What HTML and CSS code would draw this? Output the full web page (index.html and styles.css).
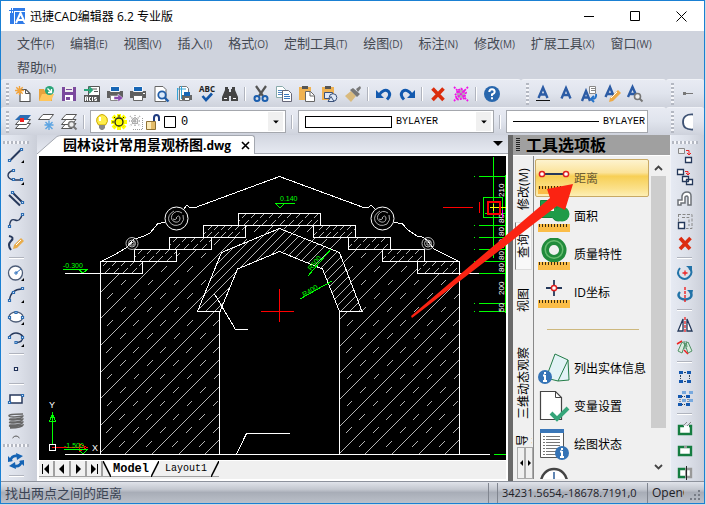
FILE: index.html
```html
<!DOCTYPE html>
<html lang="zh-CN">
<head>
<meta charset="utf-8">
<title>迅捷CAD编辑器 6.2 专业版</title>
<link rel="stylesheet" href="styles.css">
</head>
<body>
<div class="app">
  <header class="titlebar">
    <svg class="logo" viewBox="0 0 17 16" aria-hidden="true"><path fill="#2f7be8" d="M4 0h12v16H1V5h3z"/><path fill="#fff" d="M5 3h12v1H5zM5 4h1v12H5z"/><path fill="#2f7be8" d="M2 0h1v2h2v1H3v2H2V3H0V2h2z"/><path fill="none" stroke="#fff" stroke-width="2" d="M7 15L11.500 5L16 15M8.500 12h6"/></svg>
    <h1 class="app-name">迅捷CAD编辑器 6.2 专业版</h1>
    <div class="win-buttons">
      <button aria-label="最小化"><svg viewBox="0 0 11 11"><path d="M0 5.500h10"/></svg></button>
      <button aria-label="最大化"><svg viewBox="0 0 11 11"><path d="M.5.5h9v9h-9z"/></svg></button>
      <button aria-label="关闭"><svg viewBox="0 0 11 11"><path d="M.5.5l10 10m0-10l-10 10"/></svg></button>
    </div>
  </header>

  <nav class="menubar">
    <button>文件<small>(F)</small></button><button>编辑<small>(E)</small></button><button>视图<small>(V)</small></button><button>插入<small>(I)</small></button><button>格式<small>(O)</small></button><button>定制工具<small>(T)</small></button><button>绘图<small>(D)</small></button><button>标注<small>(N)</small></button><button>修改<small>(M)</small></button><button>扩展工具<small>(X)</small></button><button>窗口<small>(W)</small></button><button>帮助<small>(H)</small></button>
  </nav>

  <div class="barrow">
    <div class="bar">
      <span class="grip"></span>
      <button class="tool" aria-label="新建"><svg viewBox="0 0 16 16"><path fill="#fff" stroke="#555" stroke-width="1.200" d="M5 3.500h6l4 4v8H5z"/><path fill="none" stroke="#555" d="M10.500 3.500v4H15"/><path stroke="#f2a33a" stroke-width="1.400" d="M4.500 0v9M0 4.500h9M1.300 1.300l6.400 6.400M7.700 1.300L1.300 7.700"/></svg></button>
      <button class="tool" aria-label="打开"><svg viewBox="0 0 16 16"><path fill="#e8a33d" d="M1 3h5l1 2h7v10H1z"/><path fill="#ffc65c" d="M4 8h12l-3 7H1z"/><circle cx="11.500" cy="4.500" r="4.500" fill="#2aa579"/><path fill="none" stroke="#fff" stroke-width="1.300" d="M9.500 2.500l4 4m0-3.500v3.500H10"/></svg></button>
      <button class="tool" aria-label="保存"><svg viewBox="0 0 16 16"><path fill="#7b4a9e" d="M1 1h14v14H1z"/><path fill="#eee" d="M4 1h8v5H4z"/><path fill="#fff" d="M4 9h8v6H4z"/><path fill="#7b4a9e" d="M5 11h4v3H5zM5 3h6v1H5z"/></svg></button>
      <button class="tool" aria-label="导入ACIS"><svg viewBox="0 0 16 16"><path fill="#fff" stroke="#555" d="M4.500.5h11v9h-11z"/><path fill="#555" d="M0 9h16v7H0z"/><path fill="none" stroke="#fff" d="M1.500 15v-4h2v4m-2-2h2M7 11.500H5.500v3H7M8.500 11v4M12.500 11.500h-2v1.500h2v1.500h-2"/><path fill="none" stroke="#555" d="M7 3h6M10 5.500h4"/><path fill="none" stroke="#2aa579" stroke-width="1.800" d="M0 4h8M5 1l3 3-3 3"/></svg></button>
      <button class="tool" aria-label="发布"><svg viewBox="0 0 16 16"><path fill="#606060" d="M0 5h16v7H0z"/><path fill="#1766b5" stroke="#f4f6fa" d="M3.500.500h9v5h-9z"/><path fill="#fff" stroke="#888" d="M3.500 9.500h9v5h-9z"/><path fill="#8a4bb0" stroke="#f4f6fa" stroke-width=".5" d="M7 10.500h4V8l5 4-5 4v-2.500H7z"/></svg></button>
      <button class="tool" aria-label="打印"><svg viewBox="0 0 16 16"><path fill="#606060" d="M0 5h16v7H0z"/><path fill="#1766b5" stroke="#f4f6fa" d="M3.500.500h9v5h-9z"/><path fill="#fff" stroke="#666" d="M3.500 9.500h9v5h-9z"/><path fill="#fff" d="M13 7h2v1h-2z"/></svg></button>
      <button class="tool" aria-label="打印预览"><svg viewBox="0 0 16 16"><path fill="#fff" stroke="#666" d="M2 .5h8l3 3v12H2z"/><circle cx="9" cy="9" r="3.700" fill="#dceafa" stroke="#215da8" stroke-width="1.800"/><path stroke="#215da8" stroke-width="2.400" d="M11.500 11.500l4 4"/></svg></button>
      <button class="tool" aria-label="页面设置"><svg viewBox="0 0 16 16"><path fill="#fff" stroke="#777" d="M3.500.5h7l2 2v12h-9z"/><path stroke="#35a5d8" d="M1 3h9M5.500 0v13M1.500 2v12"/><path fill="#666" d="M6 9h10v5H6z"/><path fill="#1766b5" d="M8 6h6v4H8z"/><path fill="#fff" stroke="#666" d="M8.500 11.500h5v3h-5z"/></svg></button>
      <button class="tool" aria-label="拼写检查"><svg viewBox="0 0 16 16"><text x="8" y="6" text-anchor="middle" class="abc-label">ABC</text><path fill="none" stroke="#1357a8" stroke-width="2.600" d="M3.500 10l3.500 4 6-6.500"/></svg></button>
      <button class="tool" aria-label="查找"><svg viewBox="0 0 16 16"><path fill="#444" d="M3 1h3v2h1v3h2V3h1V1h3v3l3 7v4H9v-5H7v5H0v-4l3-7z"/><path stroke="#fff" d="M2 12.500h3M11 12.500h3"/></svg></button>
      <span class="sep"></span>
      <button class="tool" aria-label="剪切"><svg viewBox="0 0 16 16"><path stroke="#555" stroke-width="2.200" d="M3 0l7 10M13 0L6 10"/><g fill="none" stroke="#1c5fae" stroke-width="2"><circle cx="4" cy="12.500" r="2.500"/><circle cx="12" cy="12.500" r="2.500"/></g></svg></button>
      <button class="tool" aria-label="复制"><svg viewBox="0 0 16 16"><path fill="#fff" stroke="#8aa" d="M.5.5h6l3 3v8h-9z"/><path stroke="#4f86c2" d="M2 4.500h5M2 6.500h4M2 8.500h4"/><path fill="#fff" stroke="#667" d="M6.500 4.500h6l3 3v8h-9z"/><path stroke="#3976bd" d="M8 8.500h5M8 10.500h6M8 12.500h6"/></svg></button>
      <button class="tool" aria-label="粘贴"><svg viewBox="0 0 16 16"><path fill="#efb252" d="M0 1h12v13H0z"/><path fill="#555" d="M3 0h6v3H3z"/><path fill="#fff" stroke="#666" d="M6.500 5.500h5l4 4v6h-9z"/><path fill="none" stroke="#666" d="M11 5.500V10h4"/></svg></button>
      <button class="tool" aria-label="粘贴为块"><svg viewBox="0 0 16 16"><path fill="#efb252" d="M0 1h12v13H0z"/><path fill="#555" d="M3 0h6v3H3z"/><path fill="#dfe9f8" stroke="#3b527b" d="M2.500 6.500h8v6h-8z"/><circle cx="11" cy="11.500" r="3.800" fill="#dfe9f8" stroke="#3b527b"/><path fill="#dfe9f8" stroke="#3b527b" d="M6 15.500l3-5 3 5z"/></svg></button>
      <button class="tool" aria-label="特性匹配"><svg viewBox="0 0 16 16"><path fill="#d9ba7d" d="M0 10l6-5 5 5-5 6z"/><path fill="#777" d="M5 4l3-2 7 6-3 3zM11 3l4-3 1 2-3 4z"/></svg></button>
      <span class="sep"></span>
      <button class="tool" aria-label="撤消"><svg viewBox="0 0 16 16"><path fill="none" stroke="#1259ae" stroke-width="3" d="M3 9Q8 2 12.500 5.500Q15.500 9 11 13.500"/><path fill="#1259ae" d="M0 4v8h8z"/></svg></button>
      <button class="tool" aria-label="重做"><svg viewBox="0 0 16 16"><path fill="none" stroke="#1259ae" stroke-width="3" d="M13 9Q8 2 3.500 5.500Q.5 9 5 13.500"/><path fill="#1259ae" d="M16 4v8H8z"/></svg></button>
      <span class="sep"></span>
      <button class="tool" aria-label="删除"><svg viewBox="0 0 16 16"><path fill="none" stroke="#db2c0c" stroke-width="3.600" d="M2.500 2.500l11 11.500M13.500 2.500L2.500 14"/></svg></button>
      <button class="tool" aria-label="全部清除"><svg viewBox="0 0 16 16"><circle cx="8" cy="8" r="4.500" fill="#b5a5b8"/><path fill="none" stroke="#f014e8" stroke-width="1.800" stroke-dasharray="2 1" d="M1 1l14 14M15 1L1 15M8 2.500l5 4-2 6-6 1-3-4 3-5z"/></svg></button>
      <span class="sep"></span>
      <button class="tool" aria-label="帮助"><svg viewBox="0 0 16 16"><circle cx="8" cy="8" r="8" fill="#2967ad"/><path fill="none" stroke="#fff" stroke-width="2" d="M5.300 6q0-2.800 2.700-2.800T10.700 6Q10.700 7.300 8 8.500V10M8 11.300v2"/></svg></button>
    </div>
    <div class="bar">
      <span class="grip"></span>
      <button class="tool" aria-label="文字"><svg viewBox="0 0 16 16"><path class="letter" d="M3.500 12L8 1.500 12.500 12M5 8.500h6"/><path stroke="#111" d="M1 14.500h14"/></svg></button>
      <button class="tool" aria-label="单行文字"><svg viewBox="0 0 16 16"><path class="letter" d="M3.500 12.500L8 2l4.500 10.500M5 9h6"/></svg></button>
      <button class="tool" aria-label="文字样式"><svg viewBox="0 0 16 16"><path class="letter" d="M1 15L5 5l4 10M2.500 11.500h5"/><path fill="#fff" stroke="#888" d="M8.500.5h6v7h-6z"/><path stroke="#888" d="M10 2.500h4M10 4.500h4"/><path fill="none" stroke="#2472c8" stroke-width="2" d="M15 8q1 5-4 5M13 10l-3 3 3 3"/></svg></button>
      <button class="tool" aria-label="编辑文字"><svg viewBox="0 0 16 16"><path class="letter" d="M1.500 11L6 1l4 10M3 8h6"/><path fill="#edaa47" d="M5 16l1-4 8-8 3 3-8 8z"/><path stroke="#fff" d="M7 12l6-6"/></svg></button>
      <button class="tool" aria-label="查找文字"><svg viewBox="0 0 16 16"><path class="letter" d="M1 11L5.500 1 10 11M3 8h5"/><circle cx="10.500" cy="10.500" r="3" fill="#eee" stroke="#777" stroke-width="1.600"/><path stroke="#777" stroke-width="2" d="M12.500 12.500l3 3"/></svg></button>
    </div>
    <div class="bar">
      <span class="grip"></span>
      <button class="tool" aria-label="标注"><svg viewBox="0 0 16 16"><path fill="#777" d="M3 6h3v1h7v1H6v1H3z"/></svg></button>
    </div>
  </div>

  <div class="barrow wide">
    <div class="bar">
      <span class="grip"></span>
      <button class="tool" aria-label="图层"><svg viewBox="0 0 16 16"><g fill="#fff" stroke="#555"><path d="M5 9.500h10.500l-4 5H.5z"/><path d="M5 5.500h10.500l-4 5H.5z"/></g><path fill="#2c6db3" d="M5 1h11l-4 5H0z"/><path fill="#e22" d="M5 4h4v4H5z"/></svg></button>
      <button class="tool" aria-label="冻结图层"><svg viewBox="0 0 16 16"><path fill="#fff" stroke="#555" d="M5 .5h10.500l-4 5H.5z"/><path stroke="#5ba4e2" stroke-width="1.400" d="M11 6.500v9.500M6.500 11h9M7.500 8l7 7M14.500 8l-7 7"/></svg></button>
      <button class="tool" aria-label="查找图层"><svg viewBox="0 0 16 16"><g fill="#fff" stroke="#555"><path d="M5 9.500h10l-4 5H.5z"/><path d="M5 5.500h10l-4 5H.5z"/><path d="M5 .5h10.500l-4 5H.5z"/></g><circle cx="10.500" cy="10.500" r="3" fill="#eee" stroke="#777" stroke-width="1.600"/><path stroke="#777" stroke-width="2" d="M12.500 12.500l3 3"/></svg></button>
      <span class="sep"></span>
      <label class="combo">
        <svg class="state" viewBox="0 0 16 16"><path fill="#ffee4a" stroke="#c9a700" d="M4.500 11Q1.500 7.500 3 4 5 .5 8 .5t5 3.500q1.500 3.500-1.500 7z"/><path fill="#888" d="M5 11h6v3l-2 2H7l-2-2z"/><path stroke="#fff" stroke-width="2" d="M6 3v4"/></svg>
        <svg class="state" viewBox="0 0 16 16"><path stroke="#ff0" stroke-width="4" d="M8 0v16M0 8h16M2 2l12 12M14 2L2 14"/><circle cx="8" cy="8" r="4" fill="#ff0" stroke="#222" stroke-width="1.300"/><path stroke="#222" stroke-dasharray="2 12" d="M8 1v14M1 8h14M3 3l10 10M13 3L3 13"/></svg>
        <svg class="state" viewBox="0 0 16 16"><path fill="none" stroke="#999" stroke-dasharray="1 1" d="M14.500 4v11.500H4"/><path stroke="#aaa" stroke-width="1.500" stroke-dasharray="1 1" d="M7 1v12M1 7h12M2 2l10 10M12 2L2 12"/><circle cx="7" cy="7" r="3" fill="none" stroke="#aaa"/></svg>
        <svg class="state" viewBox="0 0 16 16"><path fill="none" stroke="#203c80" stroke-width="2" d="M9 8V4q0-3 2.500-3T14 4v3"/><path fill="#e3bc6a" stroke="#8f7135" d="M1.500 7.500h9v8h-9z"/><path fill="#fbeab8" d="M2 8h4v7H2z"/></svg>
        <svg class="state" viewBox="0 0 16 16"><path fill="#fff" stroke="#000" stroke-width="1" d="M2.500 2.500h11v11h-11z"/></svg>
        <select class="num" aria-label="图层"><option>0</option></select>
        <svg class="drop" viewBox="0 0 15 20"><path d="M5 9h6L8 12z"/></svg>
      </label>
      <span class="sep"></span>
      <label class="combo">
        <span class="swatch"></span>
        <select aria-label="颜色"><option>BYLAYER</option></select>
        <svg class="drop" viewBox="0 0 15 20"><path d="M5 9h6L8 12z"/></svg>
      </label>
      <span class="sep"></span>
      <label class="combo short">
        <span class="rule"></span>
        <select aria-label="线型"><option>BYLAYER</option></select>
      </label>
    </div>
    <div class="bar">
      <span class="grip"></span>
      <button class="tool" aria-label="圆弧"><svg viewBox="0 0 16 16"><path fill="#fff" d="M8 0h5v16H8z"/><path fill="#fff" stroke="#3e5274" stroke-width="1.800" d="M13 .5Q3 0 3 8t10 7.500"/></svg></button>
    </div>
  </div>

  <main class="workspace">
    <aside class="sidebar" aria-label="绘图">
      <span class="hgrip"></span>
      <button class="tool" aria-label="直线"><svg viewBox="0 0 16 16"><path class="pen" d="M2.500 13L13 2.500"/><path class="node" d="M.5 12.500h2v2h-2zM12.500 1.500h2v2h-2z"/><path class="more" d="M16 13v3h-3z"/></svg></button>
      <button class="tool" aria-label="多段线"><svg viewBox="0 0 16 16"><path class="thin" d="M5 1.500Q0 3 0 6.500T6 11h7"/><path class="node" d="M4.500.5h2v2h-2zM4.500 9.500h2v2h-2zM12.500 9.500h2v2h-2z"/><path class="more" d="M16 13v3h-3z"/></svg></button>
      <button class="tool" aria-label="双线"><svg viewBox="0 0 16 16"><path class="pen" d="M1 4l11 10.500M5 2l10 10"/><path class="node" d="M3.500.5h2v2h-2zM13.500 10.500h2v2h-2z"/></svg></button>
      <button class="tool" aria-label="样条曲线"><svg viewBox="0 0 16 16"><path class="thin" d="M1.500 13Q2 5 7 7t7-5"/><path class="node" d="M.5 12.500h2v2h-2zM13.500.5h2v2h-2z"/></svg></button>
      <button class="tool" aria-label="徒手画"><svg viewBox="0 0 16 16"><path class="pen" d="M1 1q6 1 2 5t0 9"/><path fill="#e9ad4c" d="M5 14l1-4 7-7 3 3-7 7z"/><path stroke="#fff" d="M8 10l5-5"/></svg></button>
      <span class="hsep"></span>
      <button class="tool" aria-label="圆"><svg viewBox="0 0 16 16"><circle cx="7.500" cy="8" r="7" class="round"/><path fill="none" stroke="#3475bd" d="M8 8l5-4M6 8h4M8 6v4"/><path class="more" d="M16 13v3h-3z"/></svg></button>
      <button class="tool" aria-label="圆弧"><svg viewBox="0 0 16 16"><path class="thin" d="M1.500 13Q3 2 14 2"/><path class="node" d="M.5 12.500h2v2h-2zM4.500 4.500h2v2h-2zM13.500.5h2v2h-2z"/><path class="more" d="M16 13v3h-3z"/></svg></button>
      <button class="tool" aria-label="椭圆"><svg viewBox="0 0 16 16"><ellipse cx="8" cy="8" rx="7" ry="5" class="round"/><path class="node" d="M.5 7.500h2v2h-2zM7 2.500h2v2H7zM13.500 7.500h2v2h-2z"/><path class="more" d="M16 13v3h-3z"/></svg></button>
      <button class="tool" aria-label="椭圆弧"><svg viewBox="0 0 16 16"><path class="thin" d="M1 6q3-4 7-4t7 3.500q0 6-7 6"/><path class="node" d="M.5 5.500h2v2h-2zM13.500 5.500h2v2h-2zM7 10.500h2v2H7z"/><path class="more" d="M16 13v3h-3z"/></svg></button>
      <span class="hsep"></span>
      <button class="tool" aria-label="点"><svg viewBox="0 0 16 16"><path fill="#fff" stroke="#1f3158" stroke-width="1.200" d="M6.500 6.500h3v3h-3z"/></svg></button>
      <span class="hsep"></span>
      <button class="tool" aria-label="矩形"><svg viewBox="0 0 16 16"><path fill="#fff" stroke="#27395c" stroke-width="1.500" d="M2 4h12v8H2z"/><path class="node" d="M.5 10.500h2v2h-2zM13.500 3.500h2v2h-2z"/></svg></button>
      <button class="tool" aria-label="螺旋"><svg viewBox="0 0 16 16"><path fill="none" stroke="#666" stroke-width="1.400" d="M15 1Q0 1 1 3t14 0Q15 6 2 6q-3 2 13 0 0 3-13 3-3 2 13 0 0 3-13 3-3 3 13 0-1 3-13 3"/></svg></button>
      <svg class="chev" viewBox="0 0 16 9"><path fill="none" stroke="#555" d="M4.500 6Q8 2 11.500 6"/></svg>
      <span class="hgrip low"></span>
      <button class="tool" aria-label="重生成"><svg viewBox="0 0 16 16"><path fill="none" stroke="#1463b4" stroke-width="2.600" d="M2 8Q4 2 9 3M14 8q-2 6-7 5"/><path fill="#1463b4" d="M8 0l7 3-6 4zM0 3v6l5-1zM8 16l-7-3 6-4zM16 13V7l-5 1z"/></svg></button>
      <span class="hsep"></span>
    </aside>

    <section class="document">
      <div class="doc-tabs">
        <svg class="slope" viewBox="0 0 24 19" preserveAspectRatio="none"><path fill="#fff" stroke="#a4a8b0" d="M0 19L20 1.500Q22 .5 25 .5V20"/></svg>
        <div class="doc-tab"><span class="doc-name">园林设计常用景观桥图<small>.dwg</small></span><button class="close" aria-label="关闭文档"><svg viewBox="0 0 9 9"><path d="M1 1l7 7M8 1L1 8"/></svg></button></div>
        <button class="doc-list" aria-label="文档列表"><svg viewBox="0 0 10 6"><path d="M0 0h10L5 5z"/></svg></button>
      </div>
      <div class="canvas">
        <svg class="drawing" viewBox="39 156 467 304" preserveAspectRatio="xMinYMin slice" shape-rendering="crispEdges" role="img" aria-label="景观桥图">
          <defs>
            <clipPath id="walls"><path d="M101 273H142V261H176V249H211V237H245V225H280V228L221 252L197 311H220V454H101zM459 273H417V261H382V249H348V237H314V225H280V228L339 252L362 311H340V454H459z"/></clipPath>
            <clipPath id="ring"><path d="M280 228L221 252L197 311H220L238 269L280 251L322 269L340 311H362L339 252z"/></clipPath>
            <clipPath id="steps"><path d="M101 261h42v12h-42zM134 249h42v12h-42zM169 237h42v12h-42zM203 225h42v12h-42zM238 213h82v12h-82zM417 261h42v12h-42zM382 249h42v12h-42zM348 237h42v12h-42zM313 225h42v12h-42z"/></clipPath>
          </defs>
          <g fill="none" stroke="#b4b4b4">
            <g clip-path="url(#walls)">
              <path d="M-94 460l240-240M-67 460l240-240M-41 460l240-240M-14 460l240-240M13 460l240-240M39 460l240-240M66 460l240-240M93 460l240-240M119 460l240-240M146 460l240-240M173 460l240-240M199 460l240-240M226 460l240-240M253 460l240-240M279 460l240-240M306 460l240-240M333 460l240-240M359 460l240-240M386 460l240-240M413 460l240-240M439 460l240-240"/>
              <path stroke-dasharray="8 11" d="M-81 460l240-240M-54 460l240-240M-27 460l240-240M-1 460l240-240M26 460l240-240M53 460l240-240M79 460l240-240M106 460l240-240M133 460l240-240M159 460l240-240M186 460l240-240M213 460l240-240M239 460l240-240M266 460l240-240M293 460l240-240M319 460l240-240M346 460l240-240M373 460l240-240M399 460l240-240M426 460l240-240M453 460l240-240"/>
            </g>
            <path clip-path="url(#ring)" d="M160 312l90-90M169 312l90-90M178 312l90-90M187 312l90-90M196 312l90-90M205 312l90-90M214 312l90-90M223 312l90-90M232 312l90-90M241 312l90-90M250 312l90-90M259 312l90-90M268 312l90-90M277 312l90-90M286 312l90-90M295 312l90-90M304 312l90-90M313 312l90-90M322 312l90-90M331 312l90-90M340 312l90-90M349 312l90-90M358 312l90-90"/>
            <path clip-path="url(#steps)" stroke-dasharray="8 4" d="M95 274l12-12M104 274l12-12M113 274l12-12M122 274l12-12M131 274l12-12M130 262l12-12M139 262l12-12M148 262l12-12M157 262l12-12M166 262l12-12M165 250l12-12M174 250l12-12M183 250l12-12M192 250l12-12M201 250l12-12M200 238l12-12M206 238l12-12M213 238l12-12M220 238l12-12M227 238l12-12M234 238l12-12M234 226l12-12M243 226l12-12M252 226l12-12M261 226l12-12M270 226l12-12M279 226l12-12M288 226l12-12M297 226l12-12M306 226l12-12M312 226l12-12M311 238l12-12M318 238l12-12M325 238l12-12M332 238l12-12M339 238l12-12M346 238l12-12M346 250l12-12M355 250l12-12M364 250l12-12M373 250l12-12M382 250l12-12M380 262l12-12M389 262l12-12M398 262l12-12M407 262l12-12M416 262l12-12M415 274l12-12M424 274l12-12M433 274l12-12M442 274l12-12M451 274l12-12"/>
          </g>
          <path fill="none" stroke="#fff" d="M100.500 261.500h42v12h-42zM134.500 249.500h42v12h-42zM169.500 237.500h42v12h-42zM203.500 225.500h42v12h-42zM238.500 213.500h82v12h-82zM417.500 261.500h42v12h-42zM382.500 249.500h42v12h-42zM348.500 237.500h42v12h-42zM313.500 225.500h42v12h-42z"/>
          <g fill="none" stroke="#fff">
            <path d="M100.500 261.500V454.500M219.500 311.500V454.500M339.500 311.500V454.500M459.500 261.500V454.500M65 454.500H490M65 273.500H142M459 273.500H480"/>
            <path d="M279.500 228.500L221.500 252.500L197.500 311.500H220L237.500 269L279.500 251.500L322.500 269L339.500 311.500H362L339.500 252.500z"/>
            <path d="M101 261.500L115 254.500L126 248L134 239Q146 236 150 233L158 223.500L165 222.500M184 209L187 205L189 207L194 208L279.500 176.500L365 208L369 207L371 205L375 209M394 222.500L402 223.500L408 230L417 236Q423 236 428 241L434 249L445 254.500L459 261.500"/>
            <path d="M214.500 294L235.500 329.500H248M236.500 454L246.500 433.500H290"/>
          </g>
          <g fill="none" stroke="#fff" shape-rendering="auto">
            <circle cx="176.500" cy="218.500" r="11.500"/><circle cx="382.500" cy="218.500" r="11.500"/>
            <g stroke="#aaa"><path d="M176 218q3-4 4 0 0 5-5 4-5-2-3-7 4-6 10-2M177 218q-2 3-4 1M174 211q-7 4-5 10 4 7 12 3 4-4 2-9"/><path d="M382 218q3-4 4 0 0 5-5 4-5-2-3-7 4-6 10-2M383 218q-2 3-4 1M380 211q-7 4-5 10 4 7 12 3 4-4 2-9"/></g>
            <g stroke="#bbb"><circle cx="132" cy="243.500" r="6"/><circle cx="132" cy="243.500" r="3.500"/><path d="M130 245l4-4v4zM427 245v-4h3v4z"/><circle cx="428" cy="243.500" r="6"/><circle cx="428" cy="243.500" r="3.500"/></g>
          </g>
          <g fill="none" stroke="#f00"><path d="M279.500 289v33M261 311.500h33M443 207.500h30M479.500 202v11M52 447.500h33M79 443.500l8 4-8 4z"/></g>
          <g fill="none" stroke="#0f0">
            <path d="M275 203.500h20M276 204l4 4 4-4M63 269.500h25M79 270l4 3 4-3M64 449.500h24M79 450l4 4 4-4M494 454.500h12"/>
            <path d="M52.500 444V414M49.500 421.500h6l-3-8zM308 276L331 249M300 299L332 281"/>
            <path d="M493.500 157V258M505.500 175V313M479 176.500H506M485 213.500H506M479 225.500H506M479 237.500H506M479 249.500H506M479 261.500H506M479 273.500H506M479 303.500H506M479 311.500H506M474 176.500h1M474 225.500h1M474 237.500h1M474 249.500h1M474 261.500h1M474 303.500h1M474 311.500h1M483.500 197.500h19v20h-19z"/>
          </g>
          <path fill="none" stroke="#fff" d="M49.500 444.500h6v6h-6z"/>
          <g class="dim green"><text x="280" y="201">0.140</text><text x="63" y="268">-0.300</text><text x="64" y="448">-1.500</text><text transform="translate(311 271) rotate(-50)">R500</text><text transform="translate(304 297) rotate(-30)">R400</text></g>
          <g class="dim white"><text transform="translate(504 197) rotate(-90)">210</text><text transform="translate(504 223) rotate(-90)">80</text><text transform="translate(504 236) rotate(-90)">80</text><text transform="translate(504 248) rotate(-90)">80</text><text transform="translate(504 260) rotate(-90)">80</text><text transform="translate(504 272) rotate(-90)">80</text><text transform="translate(504 295) rotate(-90)">200</text><text transform="translate(504 312) rotate(-90)">50</text></g>
          <g class="axis"><text x="49" y="408">Y</text><text x="92" y="451">X</text></g>
          <path stroke="#ff0" d="M490 207.500h16M493.500 204v7"/>
          <path stroke="#f0f" d="M502.500 210v8"/>
          <path fill="none" stroke="#f00" stroke-width="2" d="M488 202h12v12h-12z"/>
        </svg>
      </div>
      <div class="sheets">
        <button class="nav" aria-label="首个"><svg viewBox="0 0 10 10"><path d="M1 0h1v10H1zM8 0v10L3 5z"/></svg></button>
        <button class="nav" aria-label="上一个"><svg viewBox="0 0 10 10"><path d="M7 0v10L2 5z"/></svg></button>
        <button class="nav" aria-label="下一个"><svg viewBox="0 0 10 10"><path d="M3 0v10l5-5z"/></svg></button>
        <button class="nav" aria-label="末个"><svg viewBox="0 0 10 10"><path d="M2 0v10l5-5zM8 0h1v10H8z"/></svg></button>
        <button class="sheet current"><svg class="edge" viewBox="0 0 8 16"><path d="M0 0h8v16z" fill="#fff"/><path d="M0 0l8 16" stroke="#000" stroke-width="1.500"/></svg><span>Model</span><svg class="edge" viewBox="0 0 8 16"><path d="M0 0h8L0 16z" fill="#fff"/><path d="M8 0L0 16" stroke="#000" stroke-width="1.500"/></svg></button>
        <button class="sheet"><span>Layout1</span><svg class="edge" viewBox="0 0 8 16"><path d="M8 0L0 16" stroke="#000" stroke-width="1.500"/></svg></button>
      </div>
    </section>

    <div class="splitter"></div>

    <section class="palette">
      <header class="palette-head"><span class="dots"></span><h2>工具选项板</h2></header>
      <div class="palette-body">
        <div class="vtabs">
          <button class="vtab t1">修改(M)</button>
          <button class="vtab t2 current">查询</button>
          <button class="vtab t3">视图</button>
          <button class="vtab t4">三维动态观察</button>
          <button class="vtab t5">导航</button>
          <div class="vnav"><button aria-label="左"><svg viewBox="0 0 5 8"><path d="M4 1v6L1 4z"/></svg></button><button aria-label="右"><svg viewBox="0 0 5 8"><path d="M1 1v6l3-3z"/></svg></button></div>
        </div>
        <div class="commands">
          <button class="command active"><svg viewBox="0 0 32 32"><path stroke="#24385a" stroke-width="2" d="M6 12h20"/><g fill="#fff" stroke="#e02020" stroke-width="1.500"><circle cx="4" cy="12" r="2.600"/><circle cx="28" cy="12" r="2.600"/></g><path fill="#fbbd48" d="M0 24h32v8H0z"/><path stroke="#3a2b10" stroke-dasharray="1 2" stroke-width="3" d="M1 25.500h30"/></svg><span>距离</span></button>
          <button class="command"><svg viewBox="0 0 32 32"><path fill="#1f9b48" stroke="#13803a" d="M2.500.5h17V8a6.500 6.500 0 1 1-5 9.500H2.500z"/><path fill="#1f9b48" stroke="#13803a" d="M18 .5h8V8h-8z"/><circle cx="24" cy="14" r="7.500" fill="#1f9b48"/><path fill="#fff" d="M10 6h6v5h-6z"/><path fill="#fbbd48" d="M0 24h32v8H0z"/><path stroke="#3a2b10" stroke-dasharray="1 2" stroke-width="3" d="M1 25.500h30"/></svg><span>面积</span></button>
          <button class="command"><svg viewBox="0 0 32 32"><circle cx="16" cy="12" r="8.800" fill="none" stroke="#218b3c" stroke-width="7.500"/><circle cx="16" cy="11.500" r="8.800" fill="none" stroke="#67bc70" stroke-width="1.500"/><path fill="#fbbd48" d="M0 24h32v8H0z"/><path stroke="#3a2b10" stroke-dasharray="1 2" stroke-width="3" d="M1 25.500h30"/></svg><span>质量特性</span></button>
          <button class="command"><svg viewBox="0 0 32 32"><path stroke="#24385a" stroke-width="1.800" d="M16 4v16M8 12h16"/><circle cx="16" cy="12" r="2.600" fill="#fff" stroke="#e02020" stroke-width="1.500"/><path fill="#fbbd48" d="M0 24h32v8H0z"/><path stroke="#3a2b10" stroke-dasharray="1 2" stroke-width="3" d="M1 25.500h30"/></svg><span>ID坐标</span></button>
          <hr>
          <button class="command"><svg viewBox="0 0 32 32"><path fill="#e2f3f6" stroke="#237c48" d="M17 2l13 6 1 20-11 1-12-3z"/><path fill="none" stroke="#237c48" d="M20 29L30 8"/><circle cx="7" cy="25" r="7" fill="#3473b6"/><path stroke="#fff" stroke-width="2" d="M7 23v6M5 23.500h2M5 29h4M7 20v2"/></svg><span>列出实体信息</span></button>
          <button class="command"><svg viewBox="0 0 32 32"><path fill="#fff" stroke="#444" stroke-width="1.200" d="M2.500 1.500h15l6 6v22h-21z"/><path fill="none" stroke="#444" d="M17.500 1.500v6h6"/><path fill="none" stroke="#35a579" stroke-width="4" d="M13 23l6 6 11-11"/></svg><span>变量设置</span></button>
          <button class="command"><svg viewBox="0 0 32 32"><path fill="#fff" stroke="#555" d="M2.500 1.500h23v28h-23z"/><path fill="#3976b8" d="M2 1h24v4H2z"/><path stroke="#777" stroke-dasharray="2 1 14 4" d="M5 8.500h17M5 11.500h17M5 14.500h17M5 17.500h17M5 20.500h17M5 23.500h17M5 26.500h17"/><circle cx="24" cy="25" r="7" fill="#3473b6"/><path stroke="#fff" stroke-width="2" d="M24 23v6M22 23.500h2M22 29h4M24 20v2"/></svg><span>绘图状态</span></button>
          <button class="command" aria-label="时间"><svg viewBox="0 0 32 32"><circle cx="16" cy="16" r="13" fill="#fff" stroke="#444" stroke-width="2.500"/><path stroke="#2d5e9a" stroke-width="1.500" d="M16 6v10"/></svg></button>
        </div>
        <div class="scroll">
          <svg viewBox="0 0 9 6"><path d="M1 5l3.500-3.500L8 5"/></svg>
          <span class="thumb"></span>
          <svg viewBox="0 0 9 6"><path d="M1 1l3.500 3.500L8 1"/></svg>
        </div>
      </div>
    </section>

    <aside class="sidebar right" aria-label="修改">
      <span class="hgrip"></span>
      <button class="tool" aria-label="复制"><svg viewBox="0 0 16 16"><path fill="#eee" stroke="#888" d="M1.500 1.500h6v5h-6z"/><path fill="#fff" stroke="#24385a" stroke-width="1.300" d="M8.500 10.500h6v5h-6z"/><path fill="none" stroke="#e22" d="M9 3.500h3V8M10 6l2 2 2-2"/></svg></button>
      <button class="tool" aria-label="多重复制"><svg viewBox="0 0 16 16"><g fill="#fff" stroke="#24385a" stroke-width="1.300"><path d="M.5.500h6v5h-6zM5.500 7.500h6v5h-6zM9.500 10.500h6v5h-6z"/></g><path fill="none" stroke="#e22" d="M8 2.500h3V6M9 4l2 2 2-2"/></svg></button>
      <button class="tool" aria-label="偏移"><svg viewBox="0 0 16 16"><path fill="#fff" stroke="#6d7278" stroke-width="1.500" d="M1 14V9h4V5q1-4 5-4t4 4v9h-3V6q-1-2-3 0v6H4v2z"/></svg></button>
      <button class="tool" aria-label="缩放"><svg viewBox="0 0 16 16"><path fill="none" stroke="#888" stroke-dasharray="3 1.500" d="M1.500 1v8M1 1.500h14v14H9M5 4.500h7V13"/><path fill="#fff" stroke="#24385a" stroke-width="1.400" d="M1.500 9.500h6v6h-6z"/></svg></button>
      <button class="tool" aria-label="删除"><svg viewBox="0 0 16 16"><path stroke="#dc2c10" stroke-width="3.600" d="M3 3l10 11M13.500 3L3 14"/></svg></button>
      <span class="hsep"></span>
      <button class="tool" aria-label="旋转"><svg viewBox="0 0 16 16"><path fill="none" stroke="#2273a8" stroke-width="2" d="M3 3q-4 5 0 9 5 4 9 0 5-5 0-9"/><path fill="#2273a8" d="M9 1h6v5z"/><path stroke="#e22" stroke-width="1.300" d="M8 5.500v5M5.500 8h5"/></svg></button>
      <button class="tool" aria-label="三维旋转"><svg viewBox="0 0 16 16"><path fill="none" stroke="#2273a8" stroke-width="2.400" d="M3 5q-3 3 0 6 5 3 10 0 3-3 0-6"/><path fill="#2273a8" d="M10 3l6 0-1 5z"/><path stroke="#e22" stroke-width="1.400" stroke-dasharray="3 1" d="M8 0v16"/></svg></button>
      <span class="hsep"></span>
      <button class="tool" aria-label="镜像"><svg viewBox="0 0 16 16"><path fill="#fff" stroke="#24385a" stroke-width="1.300" d="M6 2v12H1zM10 2v12h5z"/><path stroke="#e22" stroke-width="1.300" stroke-dasharray="3 1" d="M8 0v16"/></svg></button>
      <button class="tool" aria-label="三维镜像"><svg viewBox="0 0 16 16"><path fill="#d9ecdf" stroke="#519166" d="M5 3l-4 9 4 2 3-9zM11 3l4 9-4 2-3-9zM7 2l1 8M9 2l1 6"/><path stroke="#e22" stroke-width="1.500" d="M0 5l5-3M7 11l4 4"/></svg></button>
      <span class="hsep"></span>
      <button class="tool" aria-label="阵列"><svg viewBox="0 0 16 16"><path fill="#1358b0" d="M2 2h4v3H2zM10 2h4v3h-4zM2 11h4v3H2zM10 11h4v3h-4z"/><path fill="none" stroke="#345" stroke-dasharray="2 1" d="M7 3.500h3M7 12.500h3M3.500 6v4M12.500 6v4"/></svg></button>
      <button class="tool" aria-label="三维阵列"><svg viewBox="0 0 16 16"><path fill="#78a9de" d="M5 0h4v3H5zM12 0h4v3h-4zM5 8h4v3H5zM12 8h4v3h-4z"/><path fill="#1358b0" d="M1 4h4v3H1zM9 4h4v3H9zM1 12h4v3H1zM9 12h4v3H9z"/><path fill="none" stroke="#345" stroke-dasharray="1 1" d="M5 5.500h4M5 13.500h4M3 8v4M11 8v4"/></svg></button>
      <span class="hsep"></span>
      <button class="tool" aria-label="打断"><svg viewBox="0 0 16 16"><path fill="#fff" stroke="#157d41" stroke-width="2.400" d="M7 5H2v8h12V5h-2"/><path fill="none" stroke="#888" d="M6 5l4-4M10 5l4-4"/></svg></button>
      <button class="tool" aria-label="合并"><svg viewBox="0 0 16 16"><path fill="#fff" stroke="#157d41" stroke-width="2.400" d="M2 4h12v8H2z"/><path stroke="#999" stroke-width="2" d="M7 4h3"/></svg></button>
      <button class="tool" aria-label="修剪"><svg viewBox="0 0 16 16"><path fill="#fff" stroke="#999" stroke-width="2.400" d="M9 4h5v8H9z"/><path fill="#fff" stroke="#157d41" stroke-width="2.400" d="M8 4H2v8h6"/><path stroke="#222" d="M9.500 1v14"/></svg></button>
    </aside>
  </main>

  <footer class="statusbar">
    <span class="hint">找出两点之间的距离</span>
    <span class="slot"></span>
    <span class="coords">34231.5654,-18678.7191,0</span>
    <span class="engine"><span>OpenGL</span></span>
    <svg class="resize" viewBox="0 0 14 14"><path fill="#777c86" d="M10 2h2v2h-2zM6 6h2v2H6zM10 6h2v2h-2zM2 10h2v2H2zM6 10h2v2H6zM10 10h2v2h-2z"/></svg>
  </footer>
</div>
<svg class="pointer" viewBox="0 0 162 134" aria-hidden="true"><path fill="#fb2312" d="M0 132L139 14L136 5L162 0L154 26L146 22L1 134z"/></svg>
</body>
</html>
```
FILE: styles.css
```css
* { box-sizing: border-box; }
body { margin: 0; height: 100vh; overflow: hidden; background: #d5d8df; font-family: "Open Sans", "Noto Sans CJK SC", sans-serif; font-size: 12px; color: #000; }
button, select { font: inherit; color: inherit; background: none; border: 0; padding: 0; margin: 0; border-radius: 0; }
svg { display: block; flex: none; }
h1, h2 { margin: 0; }

.app { display: grid; grid-template-rows: 30px auto 28px 28px minmax(0, 1fr) 22px; height: calc(100vh - 1px); margin-right: 1px; border: 1px solid #1a80d3; background: #cfd3dd; }

.titlebar { display: flex; align-items: center; background: #fff; padding-left: 8px; }
.logo { width: 17px; height: 16px; margin-right: 4px; }
.app-name { flex: 1; font-size: 12px; font-weight: 400; white-space: nowrap; }
.win-buttons { display: flex; }
.win-buttons button { width: 46px; height: 28px; display: grid; place-items: center; }
.win-buttons svg { width: 11px; height: 11px; fill: none; stroke: #000; }

.menubar { display: flex; flex-wrap: wrap; column-gap: 16px; padding: 0 16px; height: 48px; align-content: flex-start; color: #444952; font-size: 13px; }
.menubar button { height: 24px; line-height: 22px; white-space: nowrap; }
.menubar small { font-size: 10px; }

.barrow { display: grid; grid-template-columns: minmax(0, 1fr) 145px 38px; }
.barrow.wide { grid-template-columns: minmax(0, 1fr) 38px; }
.bar { display: flex; align-items: center; min-width: 0; overflow: hidden; padding-left: 5px; border-top: 1px solid #f1f3f8; border-radius: 3px; background: linear-gradient(#e8ebf3, #e0e4ed 50%, #ced2dc); }
.grip { width: 3px; height: 22px; margin-right: 2px; flex: none; background: repeating-linear-gradient(#b4b8c2 0 2px, #f5f6fa 2px 4px); }
.tool { width: 23px; height: 22px; flex: none; display: grid; place-items: center; }
.tool svg { width: 16px; height: 16px; overflow: visible; fill: none; }
.sep { width: 2px; height: 14px; margin: 0 3px; flex: none; background: #b0b4be; border-right: 1px solid #fff; }
.abc-label { font: bold 8px "Open Sans", sans-serif; fill: #222; }
.letter { fill: none; stroke: #2c5ca5; stroke-width: 2.4; }

.combo { display: flex; align-items: center; width: 196px; height: 23px; flex: none; padding: 0 2px 0 3px; background: #fff; border: 1px solid #a4a7ad; }
.sep + .combo { margin-left: 2px; }
.combo + .sep { margin-left: 5px; }
.state { width: 16px; height: 16px; margin-right: 1px; }
.combo select { flex: 1; min-width: 0; appearance: none; font: 10px "Liberation Mono", monospace; }
.combo select.num { font-size: 12px; padding-left: 2px; }
.drop { width: 15px; height: 19px; background: #f0f0f0; }
.swatch { width: 87px; height: 12px; margin: 0 4px 0 3px; border: 1px solid #000; }
.rule { width: 86px; height: 1px; margin: 0 4px 0 3px; background: #000; }
.combo.short { width: 142px; }

.workspace { display: grid; grid-template-columns: 36px minmax(0, 1fr) 5px 157px 34px; grid-template-rows: minmax(0, 1fr); min-height: 0; }
.sidebar { overflow: hidden; display: flex; flex-direction: column; align-items: center; padding: 6px 6px 0 0; background: linear-gradient(90deg, #e6eaf3, #dce0e9 50%, #cbcfd9); }
.sidebar.right { border-left: 1px solid #f1f3f8; }
.sidebar > * { flex: none; }
.sidebar .hgrip { width: 26px; height: 3px; background: repeating-linear-gradient(90deg, #b4b8c2 0 2px, #f5f6fa 2px 4px); }
.sidebar .hgrip.low { margin: 3px 0; }
.hsep { width: 15px; height: 2px; margin: 3px 0; background: #fff; border-top: 1px solid #b0b4be; }
.chev { width: 16px; height: 9px; }
.pen { fill: none; stroke: #27395c; stroke-width: 2; }
.thin { fill: none; stroke: #27395c; stroke-width: 1.4; }
.round { fill: #fff; stroke: #4d5d78; stroke-width: 1.3; }
.node { fill: #fff; stroke: #2c6db3; stroke-width: 1.2; }
.more { fill: #000; }

.document { display: grid; grid-template-rows: 19px minmax(0, 1fr) 18px; padding-bottom: 2px; background: #fff; min-width: 0; }
.doc-tabs { display: flex; background: linear-gradient(#d2d6e0, #e6e9f1); border-bottom: 1px solid #a4a8b0; }
.slope { width: 24px; height: 19px; }
.doc-tab { display: flex; align-items: center; width: 194px; height: 19px; padding-right: 4px; background: #fff; border: 1px solid #a4a8b0; border-width: 1px 1px 0 0; border-radius: 0 3px 0 0; }
.doc-name { flex: 1; padding-left: 2px; font-size: 14px; font-weight: 700; line-height: 16px; white-space: nowrap; }
.doc-name small { font-size: 12px; }
.close svg { width: 9px; height: 9px; stroke: #000; stroke-width: 1.6; }
.doc-list { margin-left: auto; padding-right: 5px; }
.doc-list svg { width: 10px; height: 6px; }
.canvas { padding: 2px 2px 1px; min-height: 0; }
.drawing { width: 100%; height: 100%; background: #000; }
.dim { font: 7px "Liberation Sans", sans-serif; }
.dim.green { fill: #0f0; }
.dim.white { fill: #fff; font-size: 8px; }
.axis { font: 9px "Liberation Sans", sans-serif; fill: #fff; }

.sheets { display: flex; margin: 0 2px; background: #f0f0f0; }
.nav { width: 16px; height: 16px; border: 1px solid #a0a0a0; border-width: 0 2px 1px 0; display: grid; place-items: center; }
.nav svg { width: 10px; height: 10px; }
.sheet { display: flex; height: 16px; font: 10px/16px "Liberation Mono", monospace; border-bottom: 1px solid #a0a0a0; }
.sheet span { padding: 0 4px 0 6px; }
.sheet.current { font-weight: 700; font-size: 12px; }
.sheet.current span { background: #fff; padding: 0 2px; }
.edge { width: 8px; height: 16px; }

.splitter { background: #696969; }
.palette { display: grid; grid-template-rows: 20px minmax(0, 1fr); padding-bottom: 2px; background: #f0f0f0; }
.palette-head { display: flex; align-items: center; background: #a0a0a0; padding-left: 3px; }
.dots { width: 4px; height: 14px; margin-right: 6px; background: repeating-linear-gradient(#222 0 1px, #a0a0a0 1px 2px); }
.palette-head h2 { font-size: 16px; line-height: 18px; font-weight: 700; }
.palette-body { display: grid; grid-template-columns: 21px minmax(0, 1fr) 17px; min-height: 0; padding-right: 3px; border-top: 1px solid #fff; }
.vtabs { display: flex; flex-direction: column; min-height: 0; border-right: 1px solid #888; padding-left: 2px; }
.vtab { flex: none; width: 17px; overflow: hidden; writing-mode: vertical-rl; text-orientation: sideways; transform: rotate(180deg); font-size: 12px; line-height: 16px; text-align: center; }
.t1 { height: 66px; }
.t2 { height: 48px; }
.t3 { height: 60px; }
.t4 { height: 106px; }
.t5 { flex: 0 1 10px; min-height: 0; text-align: left; }
.vtab.current { background: #f8f8f8; border: 1px solid #ddd; border-right: 1px solid #777; }
.vnav { display: flex; margin-top: auto; margin-left: 2px; }
.vnav button { width: 8px; height: 32px; border: 1px solid #aaa; display: grid; place-items: center; }
.vnav svg { width: 5px; height: 8px; }
.commands { display: flex; flex-direction: column; min-height: 0; overflow: hidden; padding: 3px 1px 0; }
.command { display: flex; align-items: center; gap: 4px; flex: none; height: 38px; padding: 0 2px; text-align: left; white-space: nowrap; border: 1px solid transparent; }
.command svg { width: 32px; height: 32px; }
.command.active { color: #6b5b33; border-color: #c8a964; border-radius: 2px; background: linear-gradient(#fdf3cf, #fbe39a 35%, #f7cf55 45%, #fbe18b 80%, #fdefb5); }
.commands hr { width: 92px; height: 1px; margin: 18px 0 19px 12px; flex: none; border: 0; background: #cdb87e; }
.scroll { display: flex; flex-direction: column; align-items: center; background: #f0f0f0; padding: 9px 0; }
.scroll svg { width: 9px; height: 6px; fill: none; stroke: #444; stroke-width: 1.8; }
.thumb { flex: 1; width: 15px; margin: 5px 0 36px; background: #cdcdcd; }

.statusbar { display: flex; align-items: center; min-width: 0; background: linear-gradient(#e0e3ea, #c3c7cf 35%, #a8adb7 50%, #bbc0c9); border-top: 1px solid #8d929c; color: #1d2026; }
.hint { flex: 1; padding-left: 4px; font-size: 13px; line-height: 18px; color: #3b4454; }
.slot, .coords, .engine { height: 20px; line-height: 20px; border-left: 1px solid #80858f; flex: none; }
.slot { width: 9px; }
.coords { width: 150px; padding-left: 4px; font-size: 11px; }
.engine { width: 37px; padding-left: 4px; overflow: hidden; font-size: 12px; }
.resize { width: 14px; height: 14px; margin: 4px 2px 0 4px; }

.pointer { position: absolute; left: 411px; top: 184px; width: 162px; height: 134px; pointer-events: none; }
```
